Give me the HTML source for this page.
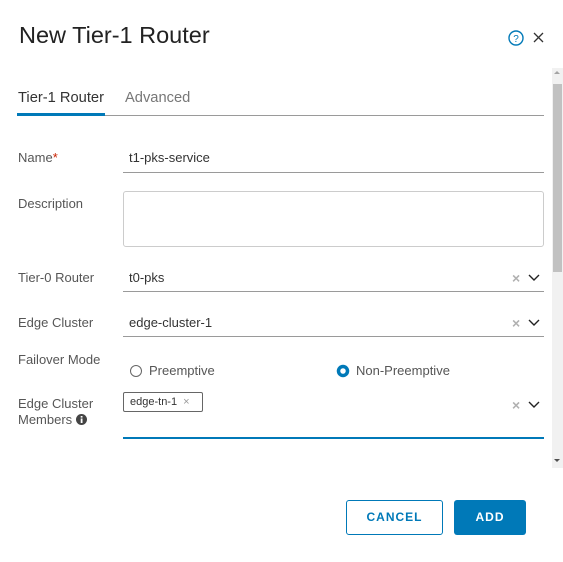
<!DOCTYPE html>
<html><head><style>
body{margin:0;width:563px;height:562px;background:#fff;font-family:"Liberation Sans",sans-serif;position:relative;overflow:hidden;color:#565656}
.a{position:absolute}
.lbl{font-size:13px;color:#565656}
.val{font-size:13px;color:#333}
.line{position:absolute;left:123px;width:421px;height:1px;background:#9a9a9a}
.x{font-size:14px;color:#b0b0b0;font-weight:bold}
</style></head><body>
<div class="a" style="left:19px;top:22px;font-size:23.5px;color:#222">New Tier-1 Router</div>
<svg class="a" style="left:507px;top:30px" width="40" height="18"><circle cx="9" cy="8" r="7" fill="none" stroke="#0079b8" stroke-width="1.4"/><text x="9" y="12" font-size="10" text-anchor="middle" fill="#0079b8" font-family="Liberation Sans">?</text><path d="M27 3 L36 12 M36 3 L27 12" stroke="#333" stroke-width="1.3"/></svg>
<div class="a" style="left:18px;top:90px;font-size:14.7px;color:#333">Tier-1 Router</div>
<div class="a" style="left:125px;top:90px;font-size:14.7px;color:#777">Advanced</div>
<div class="a" style="left:17px;top:115px;width:527px;height:1px;background:#9a9a9a"></div>
<div class="a" style="left:17px;top:113px;width:88px;height:3px;background:#0079b8"></div>
<div class="a lbl" style="left:18px;top:150px">Name<span style="color:#c92100">*</span></div>
<div class="a val" style="left:129px;top:150px">t1-pks-service</div>
<div class="line" style="top:172px"></div>
<div class="a lbl" style="left:18px;top:196px">Description</div>
<div class="a" style="left:123px;top:191px;width:419px;height:54px;border:1px solid #ccc;border-radius:3px"></div>
<div class="a lbl" style="left:18px;top:270px">Tier-0 Router</div>
<div class="a val" style="left:129px;top:270px">t0-pks</div>
<div class="a x" style="left:512px;top:270px">×</div>
<svg class="a" style="left:528px;top:274px" width="12" height="8"><path d="M1 1 L6 6 L11 1" fill="none" stroke="#222" stroke-width="1.4"/></svg>
<div class="line" style="top:291px"></div>
<div class="a lbl" style="left:18px;top:315px">Edge Cluster</div>
<div class="a val" style="left:129px;top:315px">edge-cluster-1</div>
<div class="a x" style="left:512px;top:315px">×</div>
<svg class="a" style="left:528px;top:319px" width="12" height="8"><path d="M1 1 L6 6 L11 1" fill="none" stroke="#222" stroke-width="1.4"/></svg>
<div class="line" style="top:336px"></div>
<div class="a lbl" style="left:18px;top:352px">Failover Mode</div>
<svg class="a" style="left:129px;top:364px" width="14" height="14"><circle cx="7" cy="7" r="5.5" fill="#fff" stroke="#666" stroke-width="1"/></svg>
<div class="a lbl" style="left:149px;top:363px">Preemptive</div>
<svg class="a" style="left:336px;top:364px" width="14" height="14"><circle cx="7" cy="7" r="4.5" fill="#fff" stroke="#0079b8" stroke-width="3.5"/></svg>
<div class="a lbl" style="left:356px;top:363px">Non-Preemptive</div>
<div class="a lbl" style="left:18px;top:396px;line-height:16px">Edge Cluster<br>Members <svg width="11" height="11" style="vertical-align:-1px"><circle cx="5.5" cy="5.5" r="5.5" fill="#444"/><rect x="4.7" y="4.5" width="1.8" height="4.5" fill="#fff"/><rect x="4.7" y="2" width="1.8" height="1.6" fill="#fff"/></svg></div>
<div class="a" style="left:123px;top:392px;width:80px;height:20px;border:1px solid #666;border-radius:2px;box-sizing:border-box;font-size:11px;color:#333;line-height:18px;padding-left:6px">edge-tn-1 <span style="color:#999;margin-left:3px">×</span></div>
<div class="a x" style="left:512px;top:397px">×</div>
<svg class="a" style="left:528px;top:401px" width="12" height="8"><path d="M1 1 L6 6 L11 1" fill="none" stroke="#222" stroke-width="1.4"/></svg>
<div class="a" style="left:123px;top:437px;width:421px;height:2px;background:#0079b8"></div>
<div class="a" style="left:552px;top:68px;width:11px;height:400px;background:#f1f1f1"></div>
<div class="a" style="left:553px;top:84px;width:9px;height:188px;background:#c1c1c1"></div>
<div class="a" style="left:554px;top:71px;width:0;height:0;border:3px solid transparent;border-bottom-color:#a3a3a3;border-top:0"></div>
<div class="a" style="left:554px;top:459px;width:0;height:0;border:3px solid transparent;border-top-color:#505050;border-bottom:0"></div>
<div class="a" style="left:346px;top:500px;width:97px;height:35px;border:1px solid #0079b8;border-radius:3px;box-sizing:border-box;color:#0079b8;font-size:12px;font-weight:bold;letter-spacing:1px;text-align:center;line-height:33px">CANCEL</div>
<div class="a" style="left:454px;top:500px;width:72px;height:35px;background:#0079b8;border-radius:3px;color:#fff;font-size:12px;font-weight:bold;letter-spacing:1px;text-align:center;line-height:35px">ADD</div>
</body></html>
